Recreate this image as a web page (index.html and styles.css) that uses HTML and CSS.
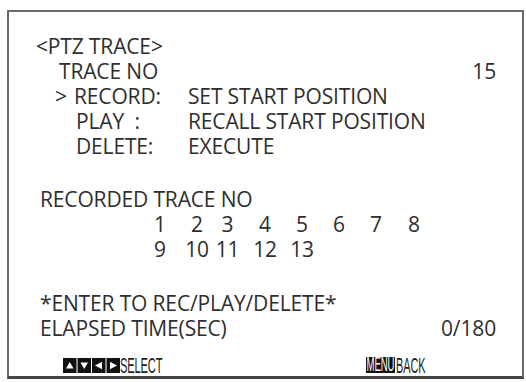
FILE: index.html
```html
<!DOCTYPE html>
<html>
<head>
<meta charset="utf-8">
<link rel="stylesheet" href="styles.css">
</head>
<body>
<div class="screen">
  <div class="main">
    <div class="line title">&lt;PTZ TRACE&gt;</div>
    <div class="line split"><span class="trace-no">TRACE NO</span><span>15</span></div>
    <div class="line item"><span class="cursor">&gt;</span><span class="label rec">RECORD:</span><span class="value">SET START POSITION</span></div>
    <div class="line item"><span class="cursor"></span><span class="label">PLAY&nbsp;&nbsp;:</span><span class="value">RECALL START POSITION</span></div>
    <div class="line item"><span class="cursor"></span><span class="label">DELETE:</span><span class="value">EXECUTE</span></div>
    <div class="line blank gap1"></div>
    <div class="line recorded">RECORDED TRACE NO</div>
    <div class="nums">
      <span>1</span><span>2</span><span>3</span><span>4</span><span>5</span><span>6</span><span>7</span><span>8</span>
      <span>9</span><span>10</span><span>11</span><span>12</span><span>13</span>
    </div>
    <div class="line blank gap2"></div>
    <div class="line recorded">*ENTER TO REC/PLAY/DELETE*</div>
    <div class="line split recorded"><span>ELAPSED TIME(SEC)</span><span>0/180</span></div>
  </div>
  <div class="footer">
    <div class="hint select">
      <svg class="arrows" width="57" height="15" viewBox="0 0 57 15">
        <rect x="0" y="0" width="13.5" height="15" fill="#111"/>
        <rect x="14.5" y="0" width="13.5" height="15" fill="#111"/>
        <rect x="29" y="0" width="13.5" height="15" fill="#111"/>
        <rect x="43.5" y="0" width="13.5" height="15" fill="#111"/>
        <polygon points="6.75,4 10.5,10.5 3,10.5" fill="#fff"/>
        <polygon points="17.5,4.5 25,4.5 21.25,11" fill="#fff"/>
        <polygon points="32,7.5 39,3.8 39,11.2" fill="#fff"/>
        <polygon points="47,3.8 47,11.2 54,7.5" fill="#fff"/>
      </svg>
      <span class="cond w-select">SELECT</span>
    </div>
    <div class="hint back">
      <span class="menu-key"><span class="cond inv">MENU</span></span>
      <span class="cond w-back">BACK</span>
    </div>
  </div>
</div>
</body>
</html>
```

FILE: styles.css
```css
html, body {
  margin: 0;
  padding: 0;
  background: #fff;
}
body {
  width: 526px;
  height: 382px;
  overflow: hidden;
  font-family: "Open Sans", "Noto Sans", sans-serif;
  color: #2e2e2e;
}
.screen {
  box-sizing: border-box;
  margin: 10px 0 0 7px;
  width: 517px;
  height: 369px;
  border: 2px solid #6a6a6a;
  border-bottom: 3px solid #444;
  display: flex;
  flex-direction: column;
}
.main {
  padding: 22px 26px 0 27px;
  font-size: 21px;
  letter-spacing: -0.15px;
}
.line {
  height: 25px;
  line-height: 25px;
  white-space: nowrap;
}
.gap1 { height: 28px; }
.gap2 { height: 29px; }
.split {
  display: flex;
  justify-content: space-between;
}
.trace-no {
  padding-left: 23px;
}
.item {
  display: grid;
  grid-template-columns: 19px 114px 1fr;
  padding-left: 19px;
}
.label { padding-left: 2px; }
.label.rec { padding-left: 0; }
.recorded {
  padding-left: 4px;
}
.nums {
  display: grid;
  grid-template-columns: 38px 36px 25px 50px 24px 50px 24px 52px;
  justify-items: center;
  margin-left: 105px;
  grid-auto-rows: 25px;
  line-height: 25px;
}
.footer {
  margin-top: auto;
  height: 22px;
  display: flex;
  align-items: center;
}
.hint {
  display: flex;
  align-items: center;
  height: 16px;
}
.select {
  margin-left: 54px;
}
.back {
  margin-left: 203px;
}
.arrows {
  display: block;
}
.cond {
  display: inline-block;
  font-family: "Liberation Sans", sans-serif;
  font-size: 11px;
  line-height: 10px;
  letter-spacing: -0.1px;
  color: #1e1e1e;
  white-space: nowrap;
  transform: scaleY(1.95);
  transform-origin: center center;
}
.w-select {
  width: 43px;
  font-size: 11.2px;
  letter-spacing: -0.2px;
}
.w-back {
  width: 30px;
  margin-left: 1px;
}
.menu-key {
  display: flex;
  align-items: center;
  justify-content: center;
  background: #111;
  width: 29px;
  height: 16px;
}
.cond.inv {
  color: #fff;
  font-size: 9.6px;
  transform: scaleY(2.1);
}
```
